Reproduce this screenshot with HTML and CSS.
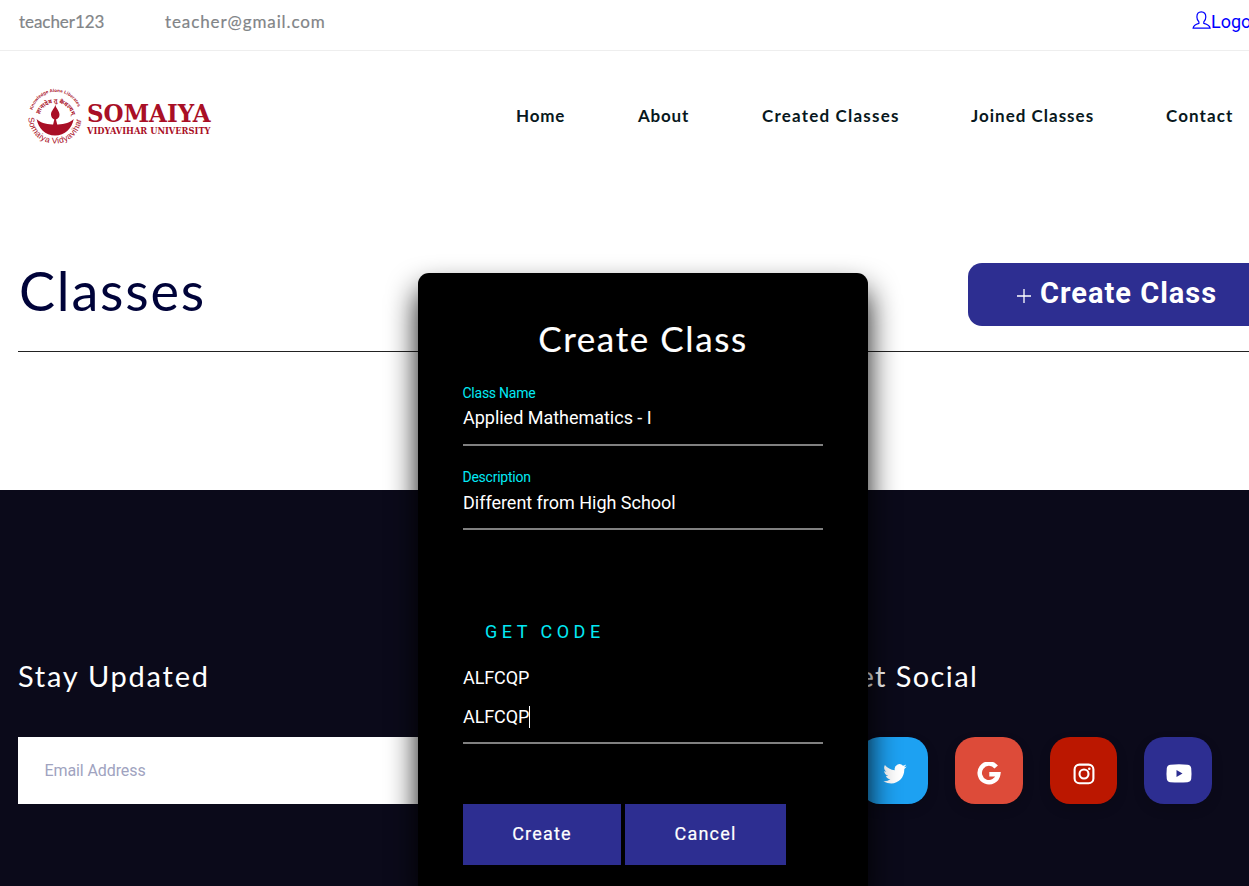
FILE: index.html
```html
<!DOCTYPE html>
<html lang="en">
<head>
<meta charset="utf-8">
<title>Classes</title>
<link rel="stylesheet" href="styles.css">
</head>
<body>
<div class="page">
  <div class="topbar">
    <span class="user">teacher123</span>
    <span class="mail">teacher@gmail.com</span>
    <a class="logout" href="#"><svg width="19" height="19" viewBox="0 0 19 19" fill="none" stroke="#00f" stroke-width="1.2"><path d="M6.900 10.900C5.500 9.500 4.900 8 4.900 6 4.900 2.600 6.300.8 9.300.8s4.500 1.800 4.500 5.200c0 2-.6 3.500-2 4.900v1.400c3 .8 5.800 1.500 6.300 4.900H1.100c.3-3.400 2.800-4.100 5.800-4.900z"/></svg>Logout</a>
  </div>
  <header class="header">
    <svg class="logo" width="190" height="60" viewBox="0 0 190 60" fill="#a90f26">
      <defs>
        <path id="arcTop" d="M7.500 24A24 24 0 0 1 54 24"/>
        <path id="arcIn" d="M14.500 28.500A16.800 16.800 0 0 1 46.500 28.500"/>
        <path id="arcBottom" d="M3.500 31.500A26.500 26 0 0 0 56.500 31.500"/>
      </defs>
      <text class="motto"><textPath href="#arcTop" textLength="60">Knowledge Alone Liberates</textPath></text>
      <text class="sanskrit"><textPath href="#arcIn">ज्ञानादेव तु कैवल्यम्</textPath></text>
      <text class="campus"><textPath href="#arcBottom" textLength="80">Somaiya Vidyavihar</textPath></text>
      <path d="M30.300 18.500c-.4 4-4.300 6-4.300 10 0 2.700 1.600 4.300 3.300 4.900l-1.200 5c-7 .2-13-2-16.500-5.400 1.700 9 8.600 16.500 18.500 16.500s17-7.500 18.600-16.500c-3.600 3.400-9.500 5.600-16.500 5.400l-1.200-5c2-.7 3.500-2.300 3.500-4.700 0-4.200-3.700-6.300-4.200-10.200z"/>
      <text class="brand" x="62" y="36" textLength="123.500" lengthAdjust="spacingAndGlyphs">SOMAIYA</text>
      <text class="brand-sub" x="62" y="48" textLength="123.500" lengthAdjust="spacingAndGlyphs">VIDYAVIHAR UNIVERSITY</text>
    </svg>
    <nav class="nav">
      <a class="n1">Home</a><a class="n2">About</a><a class="n3">Created Classes</a><a class="n4">Joined Classes</a><a class="n5">Contact</a>
    </nav>
  </header>
  <main class="main">
    <div class="title-row">
      <h1>Classes</h1>
      <button class="create"><svg width="14" height="14" viewBox="0 0 14 14"><path d="M7 0v14M0 7h14" stroke="#fff" stroke-width="1.300"/></svg><b>Create Class</b></button>
    </div>
  </main>
  <footer class="footer">
    <section class="updates">
      <h2>Stay Updated</h2>
      <div class="email">Email Address</div>
    </section>
    <section class="social">
      <h2>Get Social</h2>
      <div class="icons">
        <a class="icon tw"><svg width="24" height="20" viewBox="0 0 24 20" fill="#fff"><path d="M23.700 2.400c-.9.400-1.800.7-2.700.8 1-.6 1.700-1.500 2.100-2.600-.9.500-2 .9-3.100 1.200A4.800 4.800 0 0 0 11.800 6.200C7.800 6 4.200 4.100 1.900 1.100 0 4.300 1.900 6.800 3.400 7.600 2.600 7.600 1.800 7.300 1.200 7c0 2.400 1.700 4.300 3.900 4.800-.7.200-1.500.2-2.200.1.600 1.900 2.400 3.300 4.500 3.300A9.700 9.700 0 0 1 .4 17.200c11 6.200 21.300-1.300 20.900-12.300.9-.7 1.800-1.500 2.400-2.500z"/></svg></a>
        <a class="icon gg"><svg width="24" height="24" viewBox="0 0 24 24" fill="none" stroke="#fff" stroke-width="4.500"><path d="M19.200 5A9.300 9.300 0 1 0 21.200 12.300H12.300"/></svg></a>
        <a class="icon ig"><svg width="22" height="22" viewBox="0 0 22 22" fill="none" stroke="#fff" stroke-width="2.100"><rect x="1.600" y="1.600" width="18.800" height="18.600" rx="4.800"/><circle cx="11" cy="11" r="4.500"/><circle cx="16.300" cy="5.700" r=".7" stroke-width="1.200"/></svg></a>
        <a class="icon yt"><svg width="26" height="19" viewBox="0 0 26 19"><path d="M4.500.7Q13 0 21.500.7 24.700.9 25.200 4q.6 5.500 0 11-.5 2.800-3.700 3.200-8.500.6-17 0Q1.300 17.900.8 15q-.6-5.500 0-11Q1.300.9 4.500.7z" fill="#fff"/><path d="M10.500 6v7l6-3.500z" fill="#2d2e91"/></svg></a>
      </div>
    </section>
  </footer>
</div>
<div class="modal">
  <h3>Create Class</h3>
  <div class="field"><label>Class Name</label><div class="value first">Applied Mathematics - I</div></div>
  <div class="field"><label>Description</label><div class="value">Different from High School</div></div>
  <div class="get-code">GET CODE</div>
  <div class="code">ALFCQP</div>
  <div class="value code-input">ALFCQP<i class="caret"></i></div>
  <div class="actions"><button class="ok">Create</button><button class="cancel">Cancel</button></div>
</div>
</body>
</html>
```

FILE: styles.css
```css
* { box-sizing: border-box; }
html, body { margin: 0; height: 886px; overflow: hidden; }
body { position: relative; font-family: Roboto, sans-serif; background: #fff; }
h1, h2, h3 { margin: 0; font-weight: 400; font-family: Lato, sans-serif; white-space: nowrap; }
button { border: 0; font-family: inherit; color: #fff; background: #2d2e91; white-space: nowrap; }

.page { width: 100%; height: 886px; overflow: hidden; display: flex; flex-direction: column; }
.topbar { width: 1320px; height: 51px; border-bottom: 1px solid #eee; padding: 0 0 8px 19px; display: flex; align-items: center;
  font: 400 17px/1 Lato, sans-serif; color: #828588; -webkit-text-stroke: .2px #828588; }
.user { width: 146px; letter-spacing: -.05px; }
.mail { width: 1027px; letter-spacing: .9px; }
.logout { display: flex; align-items: center; color: #00f; font: 400 18px Roboto, sans-serif; text-decoration: none; -webkit-text-stroke: 0; }
.logout svg { margin-top: -2px; }

.header { height: 189px; padding: 35px 0 0 25px; display: flex; }
.logo { flex: none; overflow: visible; }
.motto { font: bold 4.500px "Liberation Sans", sans-serif; }
.sanskrit { font: bold 5.800px "Noto Sans", sans-serif; }
.campus { font: 8.500px "Liberation Sans", sans-serif; }
.brand { font: bold 25px "DejaVu Serif", serif; }
.brand-sub { font: bold 9.800px "DejaVu Serif", serif; }
.nav { display: flex; margin: 20px 0 0 301px; font: 700 17px/20px Lato, sans-serif; color: #081820; white-space: nowrap; letter-spacing: .8px; }
.n1 { width: 122px; }
.n2 { width: 124px; }
.n3 { width: 209px; letter-spacing: 1.200px; }
.n4 { width: 195px; letter-spacing: 1px; }
.n5 { letter-spacing: 1.100px; }

.main { height: 250px; padding: 23px 0 0 18px; }
.title-row { width: 1302px; height: 89px; border-bottom: 1px solid #222; display: flex; justify-content: space-between; padding-right: 52px; }
h1 { font-size: 54px; line-height: 56px; color: #000339; letter-spacing: 1.800px; padding-left: 1px; }
.create { width: 300px; height: 63px; border-radius: 14px; display: flex; align-items: center; padding: 0 0 3px 49px; gap: 9px; font-size: 29px; letter-spacing: 1px; }
.create svg { margin-top: 6px; }

.footer { height: 396px; background: #0b0a1a; display: flex; padding: 168px 0 0 18px; }
.updates { width: 818px; flex: none; }
h2 { font-size: 29px; line-height: 35px; height: 36px; letter-spacing: 1.750px; color: #fff; }
.social h2 { letter-spacing: 1.400px; }
.email { width: 500px; height: 67px; margin-top: 43px; background: #fff; color: #a0a3c0; font-size: 16px; line-height: 67px; padding-left: 26.500px; letter-spacing: -.1px; }
.icons { display: flex; gap: 27px; margin: 43px 0 0 24.300px; }
.icon { flex: none; width: 67.700px; height: 67px; border-radius: 20px; display: flex; align-items: center; justify-content: center; padding: 6px 0 0 1px; box-shadow: 0 5px 12px rgba(0,0,0,.15); }
.tw { background: #1da1f2; }
.gg { background: #dd4b39; }
.ig { background: #bb1700; }
.yt { background: #2d2e91; }

.modal { position: absolute; left: 418px; top: 272.500px; width: 450px; height: 613.500px; border-radius: 11px 11px 0 0; background: #000; color: #fff; padding: 43px 45px 0;
  box-shadow: 0 17px 30px rgba(0,0,0,.95); }
h3 { font-size: 35px; line-height: 44px; letter-spacing: 1.600px; text-align: center; margin-bottom: 24.500px; -webkit-text-stroke: .15px #fff; }
.field { height: 84.300px; }
label { display: block; font-size: 14px; line-height: 18px; color: #03e9f4; height: 18px; letter-spacing: -.25px; margin-left: -.5px; }
.value { font-size: 18px; line-height: 22px; height: 44px; padding-top: 5.500px; border-bottom: 2px solid #808080; letter-spacing: -.02px; }
.first { padding-top: 4.500px; }
.get-code { margin: 68px 0 0 22px; font-size: 18px; line-height: 22px; letter-spacing: 4.500px; color: #03e9f4; }
.code { font-size: 18px; line-height: 22px; margin-top: 24px; letter-spacing: -.1px; }
.code-input { height: 50px; padding-top: 12px; margin-top: 5px; display: flex; letter-spacing: -.1px; }
.caret { width: 1px; height: 22px; background: #fff; }
.actions { display: flex; gap: 4px; margin-top: 60px; }
.actions button { height: 61px; font-size: 18px; letter-spacing: 1.200px; font-weight: 400; -webkit-text-stroke: .2px #fff; padding: 0 0 2px; }
.ok { width: 158px; }
.cancel { width: 161px; }
```
